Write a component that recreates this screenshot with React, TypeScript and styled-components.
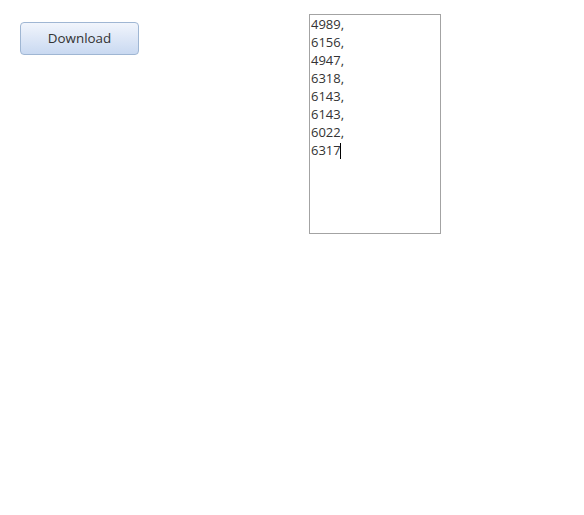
import React from "react";
import styled, { createGlobalStyle } from "styled-components";

const Global = createGlobalStyle`
  html, body { margin: 0; padding: 0; background: #ffffff; }
  body { font-family: "Open Sans", "Noto Sans", sans-serif; }
`;

const Page = styled.div`
  display: flex;
  align-items: flex-start;
  padding: 14px 0 0 20px;
`;

const DownloadButton = styled.button`
  box-sizing: border-box;
  width: 119px;
  height: 33px;
  margin-top: 8px;
  border: 1px solid #9fb6d3;
  border-radius: 4px;
  background: linear-gradient(to bottom, #f1f5fc 0%, #dfe8f7 45%, #c9d9f1 100%);
  color: #333333;
  font-family: "Open Sans", "Noto Sans", sans-serif;
  font-size: 13.4px;
  padding: 0 0 1px 0;
  cursor: pointer;
`;

const TextBox = styled.div`
  box-sizing: border-box;
  width: 132px;
  height: 220px;
  margin-left: 170px;
  border: 1px solid #a3a3a3;
  padding: 0 1px;
  font-family: "Open Sans", "Noto Sans", sans-serif;
  font-size: 13px;
  line-height: 18px;
  color: #333333;
  white-space: pre;
`;

const Line = styled.div`
  height: 18px;
`;

const Caret = styled.span`
  display: inline-block;
  width: 1px;
  height: 16px;
  margin-left: -1px;
  background: #000;
  vertical-align: -4px;
`;

const values = ["4989", "6156", "4947", "6318", "6143", "6143", "6022", "6317"];

export default function App() {
  return (
    <>
      <Global />
      <Page>
        <DownloadButton>Download</DownloadButton>
        <TextBox>
          {values.map((v, i) => (
            <Line key={i}>
              {i < values.length - 1 ? `${v},` : v}
              {i === values.length - 1 && <Caret />}
            </Line>
          ))}
        </TextBox>
      </Page>
    </>
  );
}
